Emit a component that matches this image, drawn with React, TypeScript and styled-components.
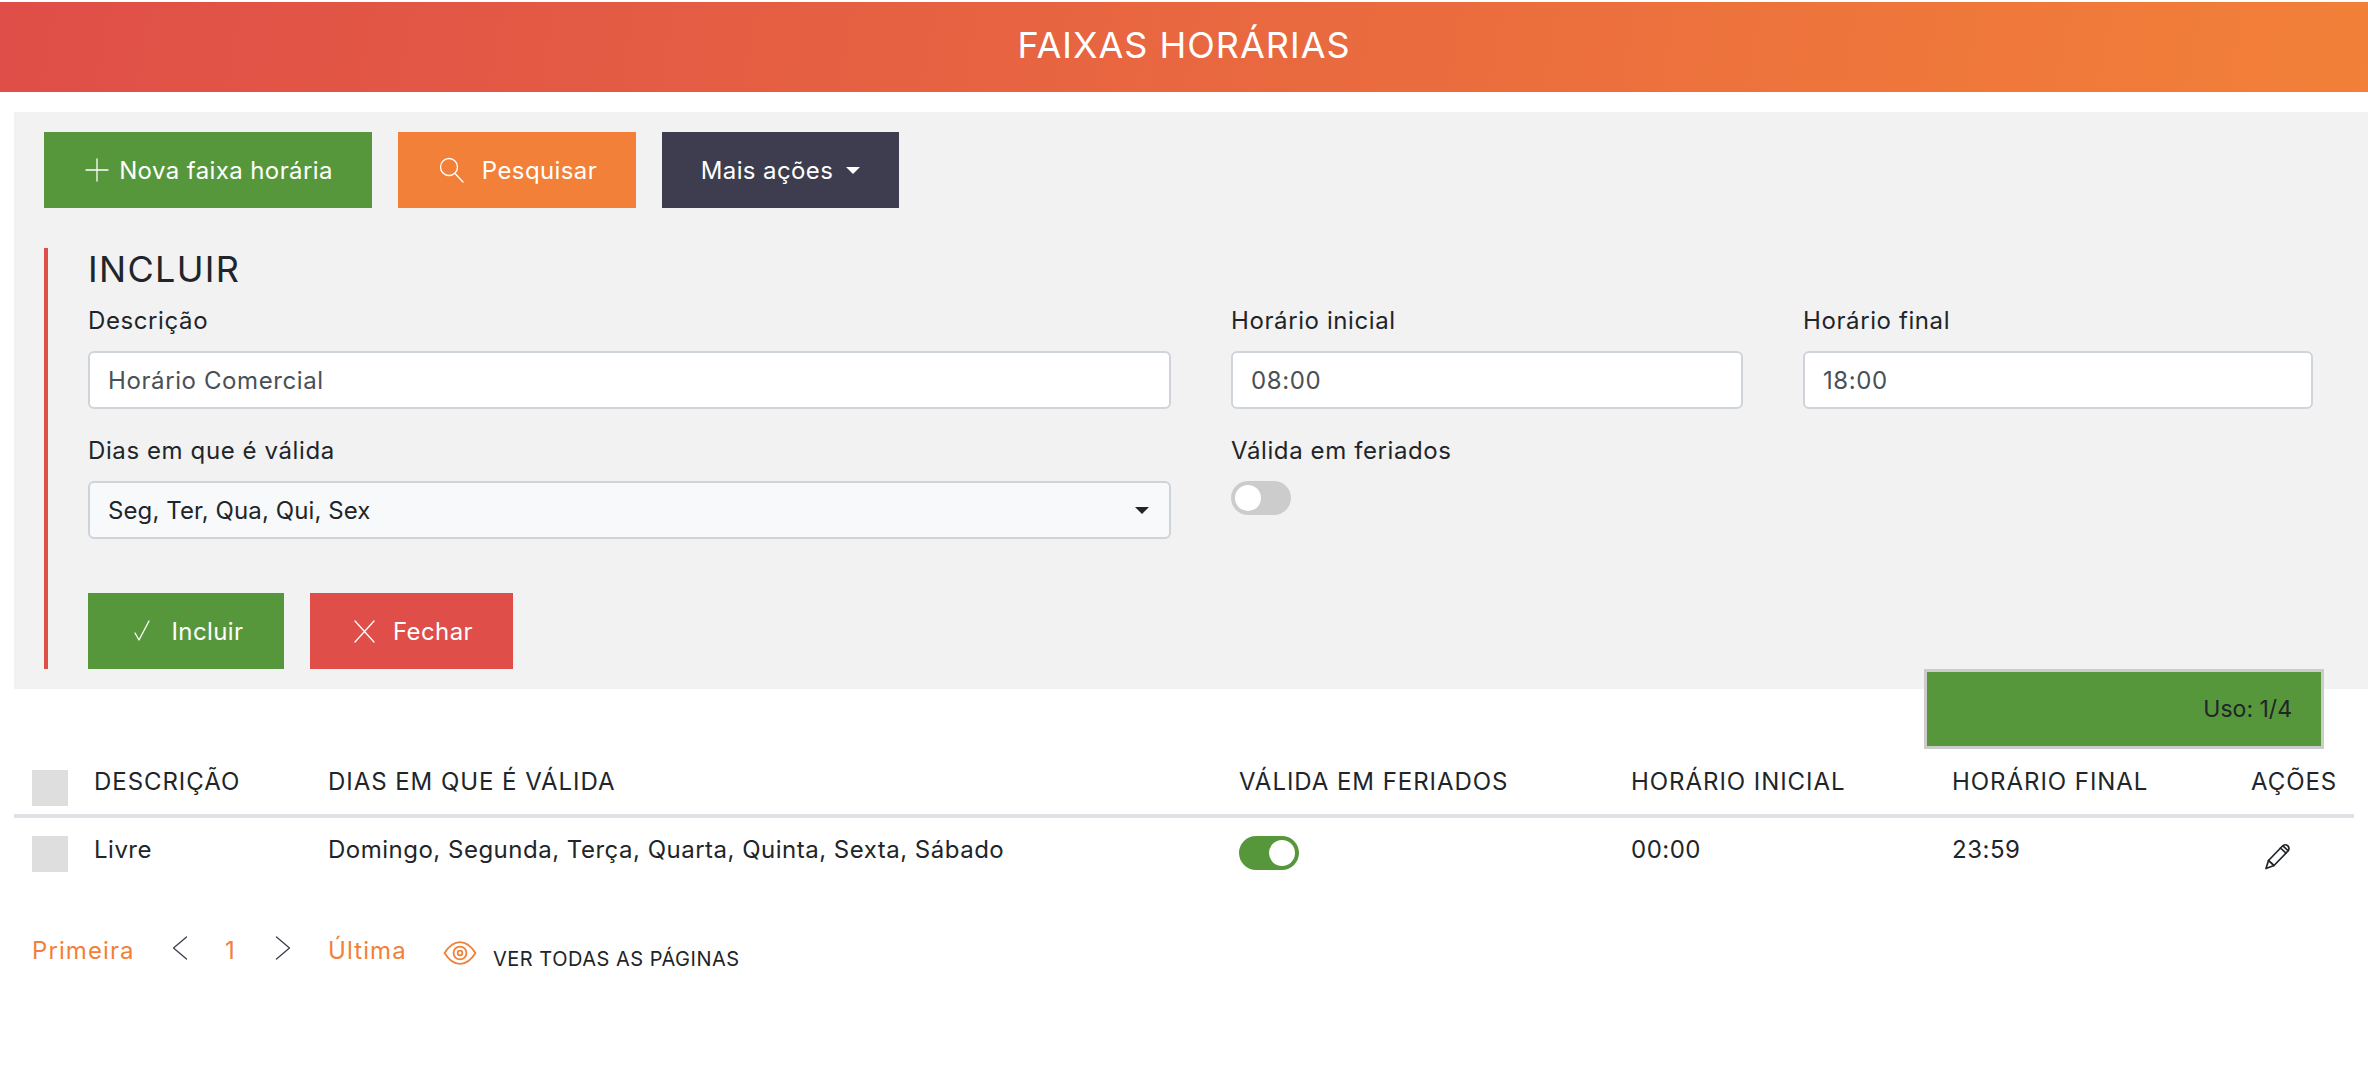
import React from "react";
import styled, { createGlobalStyle } from "styled-components";

const Global = createGlobalStyle`
  html, body { margin: 0; padding: 0; background: #fff; }
  body { font-family: Inter, "Noto Sans", "Liberation Sans", sans-serif; color: #212529; }
  * { box-sizing: border-box; }
`;

const Page = styled.div`
  min-height: 1086px;
  padding-top: 2px;
`;

const Banner = styled.header`
  height: 90px;
  padding-bottom: 4px;
  background: linear-gradient(100deg, #df4e48 0%, #f28038 100%);
  color: #fff;
  font-size: 36px;
  letter-spacing: 1px;
  display: flex;
  align-items: center;
  justify-content: center;
`;

const Panel = styled.section`
  margin: 20px 0 0 14px;
  height: 577px;
  background: #f2f2f2;
  padding: 20px 55px 20px 30px;
`;

const Toolbar = styled.div`
  display: flex;
  gap: 26px;
`;

const ActionButton = styled.button<{ $bg: string; $w: number; $gap: number }>`
  width: ${(p) => p.$w}px;
  height: 76px;
  border: 0;
  padding: 0;
  background: ${(p) => p.$bg};
  color: #fff;
  font: inherit;
  font-size: 24px;
  letter-spacing: 0.4px;
  display: flex;
  align-items: center;
  justify-content: center;
  gap: ${(p) => p.$gap}px;
`;

const Caret = styled.span`
  width: 0;
  height: 0;
  border-left: 7px solid transparent;
  border-right: 7px solid transparent;
  border-top: 7px solid currentColor;
`;

const FormBlock = styled.div`
  margin-top: 40px;
  border-left: 4px solid #df4e48;
  padding-left: 40px;
  height: 421px;
`;

const FormTitle = styled.h2`
  margin: 0;
  height: 42px;
  font-size: 36px;
  letter-spacing: 1.3px;
  font-weight: 400;
  line-height: 42px;
`;

const FormGrid = styled.div`
  display: grid;
  grid-template-columns: 1083px 512px 510px;
  column-gap: 60px;
  row-gap: 26px;
  margin-top: 15px;
`;

const Field = styled.div`
  display: flex;
  flex-direction: column;
`;

const Label = styled.label`
  height: 32px;
  line-height: 32px;
  font-size: 24px;
  letter-spacing: 0.6px;
  margin-bottom: 14px;
`;

const TextBox = styled.div<{ $muted?: boolean }>`
  height: 58px;
  border: 2px solid #ced4da;
  border-radius: 6px;
  background: ${(p) => (p.$muted ? "#f8f9fb" : "#fff")};
  color: ${(p) => (p.$muted ? "#212529" : "#495057")};
  font-size: 24px;
  letter-spacing: ${(p) => (p.$muted ? "0.1px" : "0.6px")};
  display: flex;
  align-items: center;
  justify-content: space-between;
  padding: 0 20px 0 18px;
`;

const Switch = styled.span<{ $on?: boolean }>`
  position: relative;
  display: block;
  width: 60px;
  height: 34px;
  border-radius: 17px;
  background: ${(p) => (p.$on ? "#57973c" : "#ccc")};
  &::after {
    content: "";
    position: absolute;
    top: 4px;
    left: ${(p) => (p.$on ? "30px" : "4px")};
    width: 26px;
    height: 26px;
    border-radius: 50%;
    background: #fff;
  }
`;

const RowSwitch = styled(Switch)`
  margin-top: 2px;
`;

const FormActions = styled.div`
  display: flex;
  gap: 26px;
  margin-top: 54px;
`;

const UsageRow = styled.div`
  display: flex;
  justify-content: flex-end;
  margin: -20px 44px 0 0;
  position: relative;
`;

const Usage = styled.div`
  width: 400px;
  height: 80px;
  background: #57973c;
  border: 3px solid #ccc;
  display: flex;
  align-items: center;
  justify-content: flex-end;
  padding-right: 29px;
  font-size: 23px;
`;

const Table = styled.table`
  width: 2340px;
  margin: 9px 0 0 14px;
  border-collapse: collapse;
  table-layout: fixed;
  font-size: 24px;
  letter-spacing: 0.5px;
`;

const HeadRow = styled.tr`
  height: 58px;
  border-bottom: 4px solid #dee2e6;
`;

const HeadCell = styled.th`
  padding: 8px 0 0;
  font-weight: 400;
  letter-spacing: 0.95px;
  text-align: left;
  vertical-align: top;
  line-height: 32px;
  white-space: nowrap;
`;

const BodyCell = styled.td`
  padding: 16px 0 0;
  vertical-align: top;
  line-height: 32px;
  white-space: nowrap;
`;

const Check = styled.span`
  display: block;
  width: 36px;
  height: 36px;
  margin: 2px 0 0 18px;
  background: #dedede;
`;

const HeadCheck = styled(Check)`
  margin-top: 4px;
`;

const EditIcon = styled.span`
  display: block;
  width: 28px;
  height: 28px;
  margin: 8px 0 0 13px;
  color: #212529;
`;

const Pager = styled.nav`
  display: flex;
  align-items: center;
  margin: 58px 0 0 32px;
  font-size: 24px;
  letter-spacing: 1.1px;
  color: #f28039;
`;

const PagerItem = styled.span<{ $w: number }>`
  display: flex;
  align-items: center;
  width: ${(p) => p.$w}px;
  height: 32px;
`;

const Chevron = styled.span`
  display: flex;
  margin-top: -6px;
`;

const SeeAll = styled.span`
  display: flex;
  align-items: center;
  gap: 15px;
`;

const EyeIcon = styled.span`
  display: flex;
  margin-top: 5px;
`;

const SeeAllText = styled.span`
  color: #212529;
  font-size: 20px;
  letter-spacing: 0.5px;
  position: relative;
  top: 8px;
`;

const Glyph = ({ children, size = 28, stroke = "currentColor", width = 1.3 }: { children: React.ReactNode; size?: number; stroke?: string; width?: number }) => (
  <svg style={{ display: "block" }} width={size} height={size} viewBox="0 0 28 28" fill="none" stroke={stroke} strokeWidth={width} strokeLinecap="round" strokeLinejoin="round">
    {children}
  </svg>
);

const cols = [80, 234, 911, 392, 321, 299, 103];

export default function App() {
  return (
    <Page>
      <Global />
      <Banner>FAIXAS HORÁRIAS</Banner>
      <Panel>
        <Toolbar>
          <ActionButton $bg="#57973c" $w={328} $gap={8}>
            <Glyph><path d="M14 3v22M3 14h22" /></Glyph>
            Nova faixa horária
          </ActionButton>
          <ActionButton $bg="#f28039" $w={238} $gap={17}>
            <Glyph><circle cx="12" cy="11" r="8.5" /><path d="M18 17.5l8 8.5" /></Glyph>
            Pesquisar
          </ActionButton>
          <ActionButton $bg="#3d3d4f" $w={237} $gap={13}>
            Mais ações
            <Caret />
          </ActionButton>
        </Toolbar>
        <FormBlock>
          <FormTitle>INCLUIR</FormTitle>
          <FormGrid>
            <Field>
              <Label>Descrição</Label>
              <TextBox>Horário Comercial</TextBox>
            </Field>
            <Field>
              <Label>Horário inicial</Label>
              <TextBox>08:00</TextBox>
            </Field>
            <Field>
              <Label>Horário final</Label>
              <TextBox>18:00</TextBox>
            </Field>
            <Field>
              <Label>Dias em que é válida</Label>
              <TextBox $muted>
                Seg, Ter, Qua, Qui, Sex
                <Caret />
              </TextBox>
            </Field>
            <Field>
              <Label>Válida em feriados</Label>
              <Switch />
            </Field>
          </FormGrid>
          <FormActions>
            <ActionButton $bg="#57973c" $w={196} $gap={15}>
              <Glyph><path d="M6 16l4 7L20 4" /></Glyph>
              Incluir
            </ActionButton>
            <ActionButton $bg="#df4e48" $w={203} $gap={15}>
              <Glyph><path d="M5 4l19 21M24 4L5 25" /></Glyph>
              Fechar
            </ActionButton>
          </FormActions>
        </FormBlock>
      </Panel>
      <UsageRow>
        <Usage>Uso: 1/4</Usage>
      </UsageRow>
      <Table>
        <colgroup>
          {cols.map((w, i) => (
            <col key={i} style={{ width: w }} />
          ))}
        </colgroup>
        <thead>
          <HeadRow>
            <HeadCell><HeadCheck /></HeadCell>
            <HeadCell>DESCRIÇÃO</HeadCell>
            <HeadCell>DIAS EM QUE É VÁLIDA</HeadCell>
            <HeadCell>VÁLIDA EM FERIADOS</HeadCell>
            <HeadCell>HORÁRIO INICIAL</HeadCell>
            <HeadCell>HORÁRIO FINAL</HeadCell>
            <HeadCell>AÇÕES</HeadCell>
          </HeadRow>
        </thead>
        <tbody>
          <tr>
            <BodyCell><Check /></BodyCell>
            <BodyCell>Livre</BodyCell>
            <BodyCell>Domingo, Segunda, Terça, Quarta, Quinta, Sexta, Sábado</BodyCell>
            <BodyCell><RowSwitch $on /></BodyCell>
            <BodyCell>00:00</BodyCell>
            <BodyCell>23:59</BodyCell>
            <BodyCell>
              <EditIcon>
                <Glyph width={1.7}>
                  <path d="M2 26.5l2.5-8L18.5 4a3.4 3.4 0 0 1 5.5 5L10 23.5z" />
                  <path d="M4.5 18.5l5.5 5M16.5 6l5.5 5.2M19 3.8l5 4.8" />
                </Glyph>
              </EditIcon>
            </BodyCell>
          </tr>
        </tbody>
      </Table>
      <Pager>
        <PagerItem $w={134}>Primeira</PagerItem>
        <PagerItem $w={59}>
          <Chevron>
            <Glyph stroke="#3d3d4f"><path d="M20.5 3L7.5 14l13 11" /></Glyph>
          </Chevron>
        </PagerItem>
        <PagerItem $w={44}>1</PagerItem>
        <PagerItem $w={59}>
          <Chevron>
            <Glyph stroke="#3d3d4f"><path d="M7.5 3l13 11-13 11" /></Glyph>
          </Chevron>
        </PagerItem>
        <PagerItem $w={114}>Última</PagerItem>
        <SeeAll>
          <EyeIcon>
            <Glyph size={36} width={1.4}>
              <path d="M2 14C6 7.5 10 5.5 14 5.500s8 2 12 8.500c-4 6.500-8 8.500-12 8.500S6 20.500 2 14z" />
              <circle cx="14" cy="14" r="5" />
              <circle cx="14" cy="14" r="1.800" />
            </Glyph>
          </EyeIcon>
          <SeeAllText>VER TODAS AS PÁGINAS</SeeAllText>
        </SeeAll>
      </Pager>
    </Page>
  );
}
